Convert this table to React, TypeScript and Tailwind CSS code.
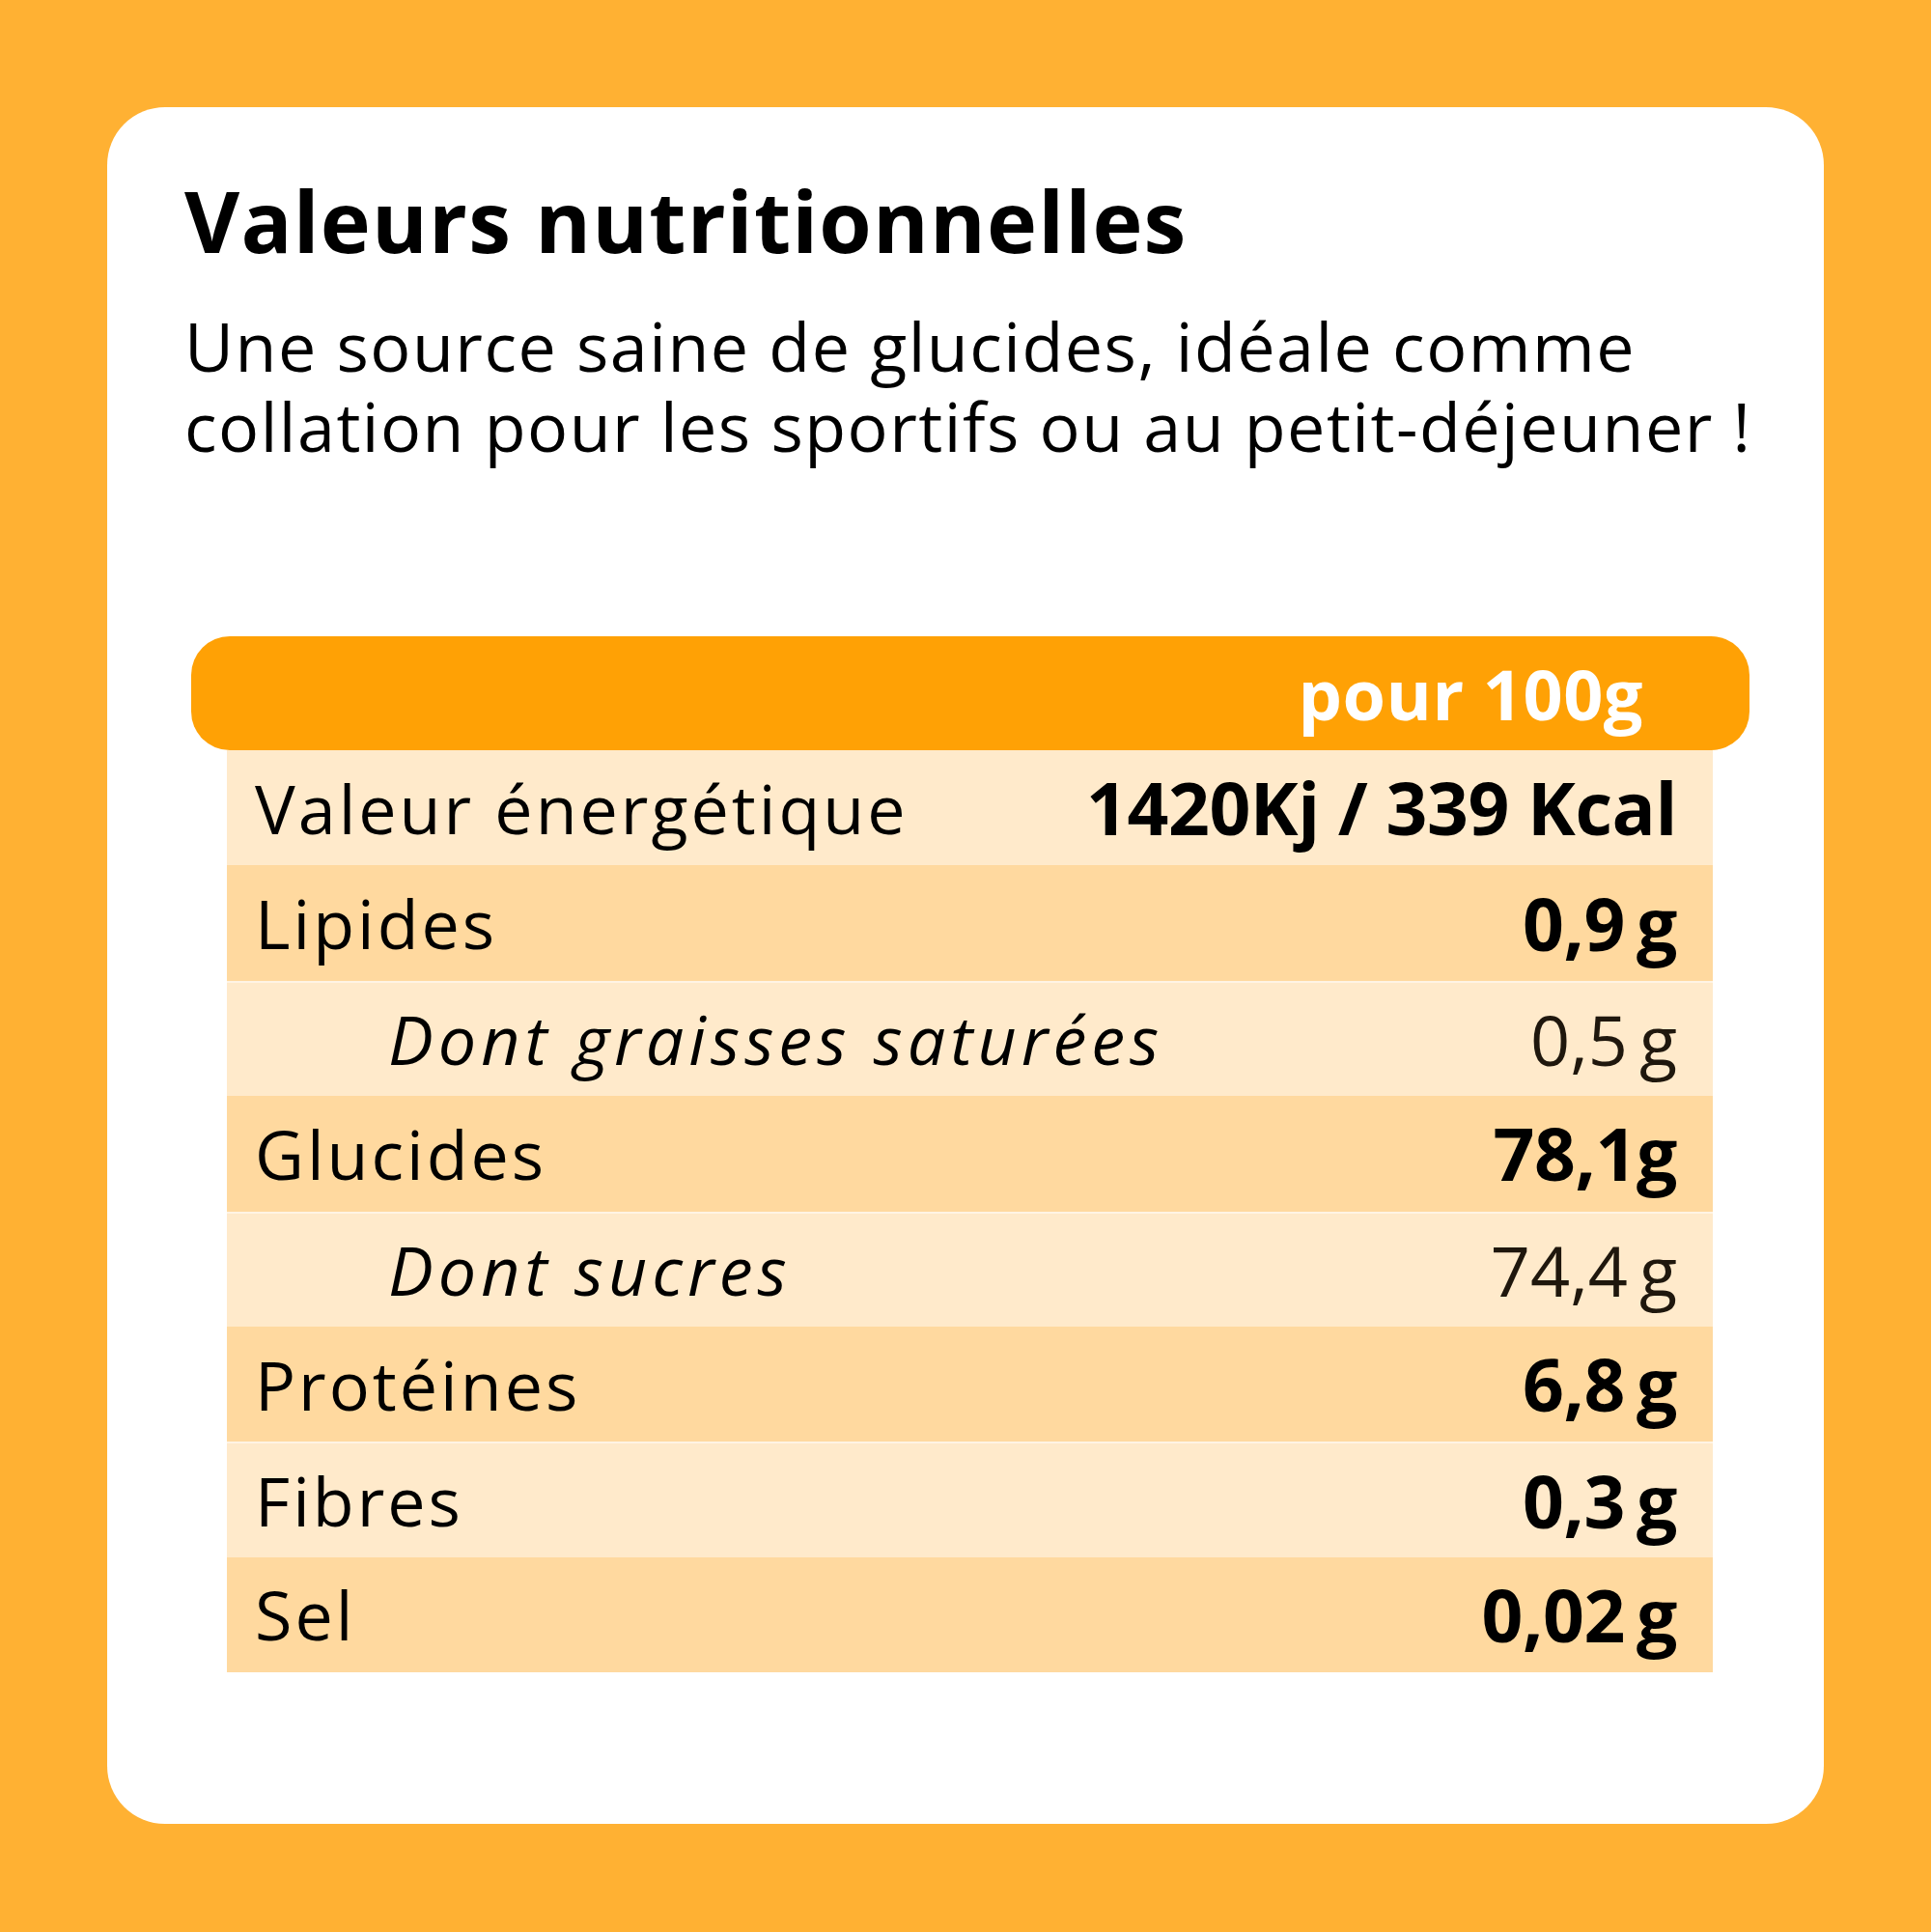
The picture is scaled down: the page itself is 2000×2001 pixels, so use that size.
// Nutrition facts card

interface Row {
  label: string;
  value: string;
  sub?: boolean;
  bold?: boolean;
}

const rows: Row[] = [
  { label: "Valeur énergétique", value: "1420Kj / 339 Kcal", bold: true },
  { label: "Lipides", value: "0,9\u2009g", bold: true },
  { label: "Dont graisses saturées", value: "0,5\u2009g", sub: true },
  { label: "Glucides", value: "78,1g", bold: true },
  { label: "Dont sucres", value: "74,4\u2009g", sub: true },
  { label: "Protéines", value: "6,8\u2009g", bold: true },
  { label: "Fibres", value: "0,3\u2009g", bold: true },
  { label: "Sel", value: "0,02\u2009g", bold: true },
];

function NutritionRow({ row, index }: { row: Row; index: number }) {
  const light = index % 2 === 0;
  return (
    <div
      className={
        light
          ? "flex h-[119.4px] items-center justify-between bg-[#FFEACB] pr-[37px] " +
            (index > 0 ? "border-t-2 border-[#FFF4E4]" : "")
          : "flex h-[119.4px] items-center justify-between bg-[#FFD99F] pr-[37px]"
      }
    >
      <span
        className={
          row.sub
            ? "pl-[167px] text-[70px] italic leading-none tracking-[5px] text-black"
            : "pl-[29px] text-[70px] leading-none tracking-[3px] text-black"
        }
      >
        {row.label}
      </span>
      <span
        className={
          row.bold
            ? "text-[75px] font-bold leading-none tracking-[-0.4px] text-black"
            : "text-[72px] leading-none text-[#1f170d]"
        }
      >
        {row.value}
      </span>
    </div>
  );
}

export default function App() {
  return (
    <div className="h-[2001px] w-[2000px] bg-[#FFB133] p-[111px] font-['Open_Sans',sans-serif]">
      <div className="flex h-[1778px] flex-col rounded-[60px] bg-white pt-[73px]">
        {/* Heading */}
        <div className="pl-[80px]">
          <h1 className="text-[88px] font-bold leading-none tracking-[1.2px] text-black">
            Valeurs nutritionnelles
          </h1>
          <p className="mt-[45px] text-[70px] leading-[83px] tracking-[1.5px] text-black">
            <span className="block">Une source saine de glucides, idéale comme</span>
            <span className="block">collation pour les sportifs ou au petit-déjeuner !</span>
          </p>
        </div>

        {/* Table */}
        <div className="mt-[176px] flex flex-col">
          <div className="ml-[87px] mr-[77px] flex h-[118px] items-center justify-end rounded-[40px] bg-[#FFA105] pr-[110px]">
            <span className="text-[72px] font-bold leading-none tracking-[0.5px] text-white">pour 100g</span>
          </div>
          <div className="ml-[124px] mr-[115px] flex flex-col">
            {rows.map((row, i) => (
              <NutritionRow key={row.label} row={row} index={i} />
            ))}
          </div>
        </div>
      </div>
    </div>
  );
}
